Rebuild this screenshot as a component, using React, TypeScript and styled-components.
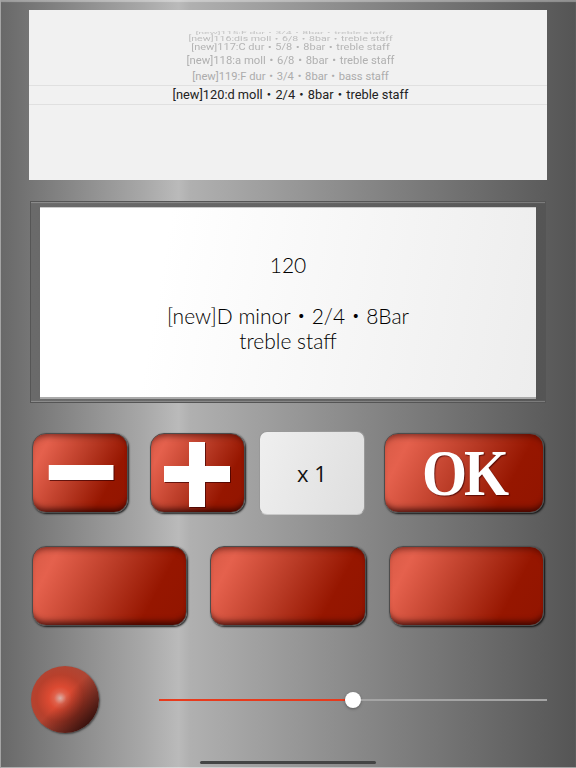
import React from 'react';
import styled, { createGlobalStyle } from 'styled-components';

const GlobalStyle = createGlobalStyle`
  html, body {
    margin: 0;
    padding: 0;
    background: #666;
  }
`;

const Page = styled.div`
  position: relative;
  box-sizing: border-box;
  width: 576px;
  height: 768px;
  overflow: hidden;
  padding: 10px 29px 0;
  display: flex;
  flex-direction: column;
  background: linear-gradient(90deg, #686868 0%, #a8a8a8 25%, #bababa 31%, #b0b0b0 33%, #555 100%);
  box-shadow: inset 1px 0 0 #a5a5a5, inset 0 2px 1px rgba(255, 255, 255, 0.35), inset 0 -1px 0 rgba(255, 255, 255, 0.45);
`;

const Picker = styled.div`
  height: 170px;
  background: #f1f1f1;
  overflow: hidden;
  display: flex;
  flex-direction: column;
  padding-top: 21px;
  box-sizing: border-box;
`;

const Wheel = styled.div<{ $h: number; $size: number; $sy: number; $c: string }>`
  height: ${(p) => p.$h}px;
  line-height: ${(p) => p.$h}px;
  flex: none;
  padding-left: 5px;
  text-align: center;
  white-space: nowrap;
  font-family: Roboto, 'Noto Sans CJK JP', sans-serif;
  font-size: ${(p) => p.$size}px;
  color: ${(p) => p.$c};
  transform: scaleY(${(p) => p.$sy});
`;

const Selected = styled(Wheel)`
  border-top: 1px solid #e0e0e0;
  border-bottom: 1px solid #e0e0e0;
  box-sizing: content-box;
  transform: none;
  color: #222;
`;

const Frame = styled.div`
  margin: 21px 1px 0 1px;
  height: 202px;
  box-sizing: border-box;
  padding: 5px 9px 3px;
  border: 1px solid #555;
  background: linear-gradient(90deg, #6a6a6a, #646464 50%, #555);
  box-shadow: inset 0 2px 1px -1px rgba(255, 255, 255, 0.25), inset 0 -2px 1px -1px rgba(255, 255, 255, 0.25);
`;

const Readout = styled.div`
  height: 100%;
  background: linear-gradient(100deg, #fff 25%, #ededed 100%);
  border-top: 1px solid #ccc;
  border-bottom: 2px solid #aaa;
  box-sizing: border-box;
  display: flex;
  flex-direction: column;
  align-items: center;
  font-family: Lato, 'Noto Sans CJK JP', sans-serif;
  font-weight: 300;
  color: #000;
  font-size: 21px;
  line-height: 25px;
  padding-top: 44px;
`;

const Title = styled.div`
  margin-bottom: 26px;
`;

const KeyRow = styled.div`
  display: flex;
  align-items: center;
  margin-left: 3px;
  margin-right: 3px;
  height: 84px;
  margin-top: 28px;
`;

const WideRow = styled.div`
  display: flex;
  justify-content: space-between;
  margin: 31px 3px 0;
`;

const RedKey = styled.button<{ $w: number; $ml?: number }>`
  width: ${(p) => p.$w}px;
  height: 80px;
  margin-left: ${(p) => p.$ml ?? 0}px;
  padding: 0;
  flex: none;
  display: flex;
  align-items: center;
  justify-content: center;
  border: 1px solid #4c4c4c;
  border-radius: 14px;
  background: linear-gradient(118deg, #d85a46 0%, #e5614d 14%, #b83a25 48%, #961600 76%, #921500 100%);
  box-shadow:
    inset 0 7px 6px -5px rgba(40, 0, 0, 0.55),
    inset 0 -8px 6px -5px rgba(30, 0, 0, 0.75),
    1px 1px 2px rgba(0, 0, 0, 0.85);
`;

const Glyph = styled.svg<{ $dx?: number; $dy?: number }>`
  display: block;
  transform: translate(${(p) => p.$dx ?? 0}px, ${(p) => p.$dy ?? 0}px);
  filter: drop-shadow(1px 1px 0.5px rgba(60, 0, 0, 0.7));
`;

const OkLabel = styled.span`
  display: inline-block;
  font-family: 'Liberation Serif', serif;
  font-weight: 700;
  font-size: 58px;
  line-height: 1;
  color: #fff;
  letter-spacing: -3px;
  transform: translateY(1px) scaleY(1.12);
  text-shadow: 1px 1px 1px rgba(60, 0, 0, 0.7);
`;

const StepKey = styled.button`
  width: 106px;
  height: 84px;
  margin-left: 14px;
  flex: none;
  padding: 0;
  border: 1px solid #999;
  border-bottom-color: #c8c8c8;
  border-radius: 8px;
  background: linear-gradient(110deg, #efefef, #dedede);
  font-family: 'Open Sans', sans-serif;
  font-size: 22px;
  color: #111;
`;

const BottomRow = styled.div`
  display: flex;
  align-items: center;
  margin: 40px 0 0 2px;
`;

const Lamp = styled.div`
  width: 68px;
  height: 67px;
  flex: none;
  border-radius: 50%;
  background:
    linear-gradient(135deg, rgba(0, 0, 0, 0) 48%, rgba(20, 0, 0, 0.8) 88%),
    radial-gradient(circle at 43% 48%, #d9b0a8 0%, #e0604a 12%, #dc4a32 22%, #b8402c 45%, #a84a3a 80%, #8f4034 100%);
  box-shadow: 1px 1px 2px rgba(0, 0, 0, 0.55);
`;

const Slider = styled.div`
  flex: 1;
  margin-left: 60px;
  display: flex;
  align-items: center;
`;

const Track = styled.div<{ $on?: boolean }>`
  height: 2px;
  background: ${(p) => (p.$on ? '#e83a1c' : '#a4a4a4')};
  flex: ${(p) => (p.$on ? '0 0 186px' : '1')};
`;

const Thumb = styled.div`
  width: 16px;
  height: 16px;
  flex: none;
  border-radius: 50%;
  background: #fff;
  box-shadow: 0 1px 3px rgba(0, 0, 0, 0.35);
`;

const HomeBar = styled.div`
  position: absolute;
  left: 200px;
  bottom: 4px;
  width: 176px;
  height: 3px;
  border-radius: 2px;
  background: #444;
`;

const rows = [
  { t: '[new]115:F dur・3/4・8bar・treble staff', h: 3.5, s: 10.6, sy: 0.4, c: '#c4c4c4' },
  { t: '[new]116:dis moll・6/8・8bar・treble staff', h: 7.5, s: 10.65, sy: 0.62, c: '#bdbdbd' },
  { t: '[new]117:C dur・5/8・8bar・treble staff', h: 11.5, s: 11, sy: 0.82, c: '#b4b4b4' },
  { t: '[new]118:a moll・6/8・8bar・treble staff', h: 14, s: 11.3, sy: 0.93, c: '#b0b0b0' },
  { t: '[new]119:F dur・3/4・8bar・bass staff', h: 17.5, s: 11.2, sy: 1, c: '#acacac' },
];

const App = () => {
  return (
    <Page>
      <GlobalStyle />
      <Picker>
        {rows.map((r) => (
          <Wheel key={r.t} $h={r.h} $size={r.s} $sy={r.sy} $c={r.c}>
            {r.t}
          </Wheel>
        ))}
        <Selected $h={18} $size={12.8} $sy={1} $c="#222">
          [new]120:d moll・2/4・8bar・treble staff
        </Selected>
      </Picker>

      <Frame>
        <Readout>
          <Title>120</Title>
          <div>[new]D minor・2/4・8Bar</div>
          <div>treble staff</div>
        </Readout>
      </Frame>

      <KeyRow>
        <RedKey $w={96} aria-label="minus">
          <Glyph $dx={1.5} width="66" height="16" viewBox="0 0 66 16">
            <rect width="65" height="15" fill="#fff" />
          </Glyph>
        </RedKey>
        <RedKey $w={95} $ml={22} aria-label="plus">
          <Glyph $dy={2} width="67" height="66" viewBox="0 0 67 66">
            <path d="M25 0h16v24h25v16H41v25H25V40H0V24h25z" fill="#fff" />
          </Glyph>
        </RedKey>
        <StepKey>x 1</StepKey>
        <RedKey $w={160} $ml={19}>
          <OkLabel>OK</OkLabel>
        </RedKey>
      </KeyRow>

      <WideRow>
        <RedKey $w={155} />
        <RedKey $w={156} />
        <RedKey $w={155} />
      </WideRow>

      <BottomRow>
        <Lamp />
        <Slider>
          <Track $on />
          <Thumb />
          <Track />
        </Slider>
      </BottomRow>

      <HomeBar />
    </Page>
  );
};

export default App;
